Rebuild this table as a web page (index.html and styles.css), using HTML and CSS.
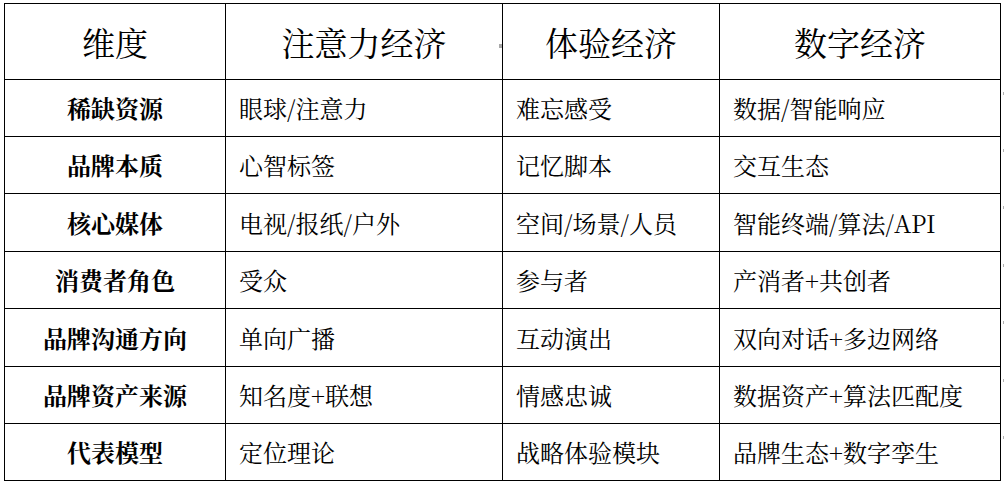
FILE: index.html
```html
<!DOCTYPE html>
<html lang="zh-CN">
<head>
<meta charset="utf-8">
<title>经济形态对比</title>
<link rel="stylesheet" href="styles.css">
</head>
<body>
<div class="page">
  <div class="grid">
    <div class="cell head">维度</div>
    <div class="cell head">注意力经济</div>
    <div class="cell head mark-left">体验经济</div>
    <div class="cell head">数字经济</div>

    <div class="cell dim">稀缺资源</div>
    <div class="cell">眼球/注意力</div>
    <div class="cell">难忘感受</div>
    <div class="cell end">数据/智能响应</div>

    <div class="cell dim">品牌本质</div>
    <div class="cell">心智标签</div>
    <div class="cell">记忆脚本</div>
    <div class="cell end">交互生态</div>

    <div class="cell dim">核心媒体</div>
    <div class="cell">电视/报纸/户外</div>
    <div class="cell">空间/场景/人员</div>
    <div class="cell end">智能终端/算法/API</div>

    <div class="cell dim">消费者角色</div>
    <div class="cell">受众</div>
    <div class="cell">参与者</div>
    <div class="cell end">产消者+共创者</div>

    <div class="cell dim">品牌沟通方向</div>
    <div class="cell">单向广播</div>
    <div class="cell">互动演出</div>
    <div class="cell end">双向对话+多边网络</div>

    <div class="cell dim">品牌资产来源</div>
    <div class="cell">知名度+联想</div>
    <div class="cell">情感忠诚</div>
    <div class="cell end">数据资产+算法匹配度</div>

    <div class="cell dim">代表模型</div>
    <div class="cell">定位理论</div>
    <div class="cell">战略体验模块</div>
    <div class="cell end">品牌生态+数字孪生</div>
  </div>
</div>
</body>
</html>
```
FILE: styles.css
```css
html, body {
  margin: 0;
  padding: 0;
  background: #ffffff;
}

.page {
  padding: 3px 0 0 4px;
  font-family: "Noto Serif CJK SC", "Noto Sans CJK SC", serif;
  color: #000000;
}

.grid {
  display: grid;
  grid-template-columns: 221px 277px 217px 281px;
  grid-template-rows: 76px 57px 57px 58px 57px 58px 57px 57px;
  width: 996px;
  border-top: 1px solid #000;
  border-left: 1px solid #000;
}

.cell {
  position: relative;
  border-right: 1px solid #000;
  border-bottom: 1px solid #000;
  display: flex;
  align-items: center;
  padding-left: 13px;
  font-size: 24px;
  line-height: 1;
  white-space: nowrap;
}

.head {
  justify-content: center;
  padding-left: 0;
  font-size: 33px;
}

.dim {
  justify-content: center;
  padding-left: 0;
  font-weight: bold;
}

.end::after {
  content: "";
  position: absolute;
  right: -5px;
  top: 12px;
  width: 2px;
  height: 3px;
  background: #b0b0b0;
}

.mark-left::before {
  content: "";
  position: absolute;
  left: -4px;
  top: 40px;
  width: 3px;
  height: 4px;
  background: #a8a8a8;
}
```
